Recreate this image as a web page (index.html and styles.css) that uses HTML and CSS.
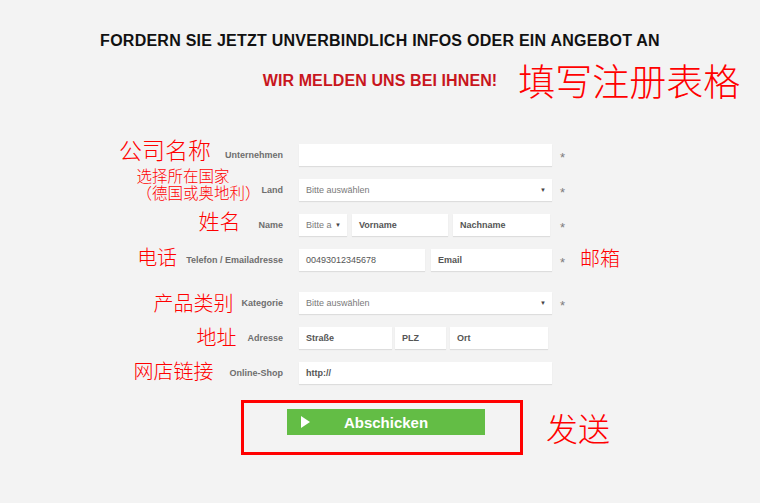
FILE: index.html
```html
<!DOCTYPE html>
<html lang="de">
<head>
<meta charset="utf-8">
<title>Anfrage</title>
<link rel="stylesheet" href="styles.css">
</head>
<body>
<div class="page">
  <h1 class="title">FORDERN SIE JETZT UNVERBINDLICH INFOS ODER EIN ANGEBOT AN</h1>
  <div class="subrow">
    <span></span>
    <h2 class="subtitle">WIR MELDEN UNS BEI IHNEN!</h2>
    <span class="note note-head">填写注册表格</span>
  </div>

  <form class="form">
    <div class="row">
      <div class="lab"><span class="note n-company">公司名称</span><span class="label">Unternehmen</span></div>
      <div class="fields"><div class="inp w-full"></div></div>
      <div class="req">*</div>
    </div>

    <div class="row">
      <div class="lab"><span class="note n-country"><span class="line1">选择所在国家</span><span class="line2">（德国或奥地利）</span></span><span class="label">Land</span></div>
      <div class="fields"><div class="inp w-full sel"><span class="ph">Bitte auswählen</span><span class="arrow">▼</span></div></div>
      <div class="req">*</div>
    </div>

    <div class="row">
      <div class="lab"><span class="note n-name">姓名</span><span class="label">Name</span></div>
      <div class="fields f-name">
        <div class="inp w-anrede sel"><span class="ph">Bitte a</span><span class="arrow">▼</span></div>
        <div class="inp w-vorname"><span class="val">Vorname</span></div>
        <div class="inp w-nachname"><span class="val">Nachname</span></div>
      </div>
      <div class="req">*</div>
    </div>

    <div class="row">
      <div class="lab"><span class="note n-phone">电话</span><span class="label">Telefon / Emailadresse</span></div>
      <div class="fields f-phone">
        <div class="inp w-phone"><span class="num">00493012345678</span></div>
        <div class="inp w-email"><span class="val">Email</span></div>
      </div>
      <div class="req">*</div>
      <div class="note n-mail">邮箱</div>
    </div>

    <div class="row row-spaced">
      <div class="lab"><span class="note n-cat">产品类别</span><span class="label">Kategorie</span></div>
      <div class="fields"><div class="inp w-full sel"><span class="ph">Bitte auswählen</span><span class="arrow">▼</span></div></div>
      <div class="req">*</div>
    </div>

    <div class="row">
      <div class="lab"><span class="note n-addr">地址</span><span class="label">Adresse</span></div>
      <div class="fields f-addr">
        <div class="inp w-street"><span class="val">Straße</span></div>
        <div class="inp w-plz"><span class="val">PLZ</span></div>
        <div class="inp w-ort"><span class="val">Ort</span></div>
      </div>
    </div>

    <div class="row">
      <div class="lab"><span class="note n-shop">网店链接</span><span class="label">Online-Shop</span></div>
      <div class="fields"><div class="inp w-full"><span class="val">http://</span></div></div>
    </div>
  </form>

  <div class="submit-row">
    <div class="submit-box">
      <button class="btn" type="button"><span class="tri"></span><span class="btn-text">Abschicken</span><span></span></button>
    </div>
    <span class="note n-send">发送</span>
  </div>
</div>
</body>
</html>
```

FILE: styles.css
```css
html, body {
  margin: 0;
  padding: 0;
  background: #f3f3f3;
}
body {
  font-family: "Liberation Sans", Arial, sans-serif;
  width: 760px;
  height: 503px;
  overflow: hidden;
}
.page {
  padding-top: 31px;
}
.title {
  margin: 0;
  font-size: 16px;
  line-height: 20px;
  font-weight: bold;
  color: #111;
  text-align: center;
  letter-spacing: 0.25px;
}
.subrow {
  display: grid;
  grid-template-columns: 1fr auto 1fr;
  align-items: center;
  height: 40px;
  margin-top: 9px;
}
.subtitle {
  margin: 0;
  font-size: 16px;
  line-height: 20px;
  font-weight: bold;
  color: #c8161d;
  letter-spacing: 0.1px;
  padding-top: 2px;
}
.note {
  font-family: "Noto Sans CJK SC", "Noto Sans CJK JP", sans-serif;
  font-weight: 300;
  color: #ff0000;
  white-space: nowrap;
}
.note-head {
  font-size: 37px;
  line-height: 40px;
  margin-left: 21px;
}

.form {
  margin-top: 44px;
  display: flex;
  flex-direction: column;
  gap: 13px;
}
.row {
  display: grid;
  grid-template-columns: 283px 269px 28px auto;
  grid-template-rows: 22px;
  height: 22px;
  align-items: center;
}
.row-spaced {
  margin-top: 8px;
}
.lab {
  display: flex;
  justify-content: flex-end;
  align-items: center;
  height: 22px;
}
.label {
  font-size: 9px;
  font-weight: bold;
  color: #6e6e6e;
  white-space: nowrap;
}
.fields {
  display: flex;
  padding-left: 16px;
  height: 22px;
}
.f-name { gap: 5px; }
.f-phone { gap: 6px; }
.f-addr { gap: 3px; }
.f-addr .w-ort { margin-left: 1px; }

.inp {
  background: #fff;
  height: 22px;
  box-sizing: border-box;
  padding: 0 7px;
  display: flex;
  align-items: center;
  box-shadow: 0 1px 1px rgba(0, 0, 0, 0.09);
  font-size: 9px;
}
.w-full { width: 253px; }
.w-anrede { width: 48px; }
.w-vorname { width: 96px; }
.w-nachname { width: 97px; }
.w-phone { width: 126px; }
.w-email { width: 121px; }
.w-street { width: 93px; }
.w-plz { width: 51px; }
.w-ort { width: 98px; }

.sel {
  justify-content: space-between;
}
.ph {
  color: #7a7a7a;
}
.val {
  color: #555;
  font-weight: bold;
}
.num {
  color: #555;
}
.arrow {
  font-size: 6px;
  color: #444;
  margin-right: -1px;
}
.req {
  padding-left: 8px;
  padding-top: 6px;
  font-size: 13px;
  line-height: 16px;
  color: #7c7c7c;
}

.n-company {
  font-size: 23px;
  line-height: 26px;
  margin-right: 14px;
  margin-bottom: 12px;
}
.n-country {
  display: flex;
  flex-direction: column;
  align-items: flex-start;
  font-size: 15.5px;
  line-height: 17px;
  margin-right: 1px;
  margin-bottom: 13px;
}
.n-name {
  font-size: 21px;
  line-height: 24px;
  margin-right: 18px;
  margin-bottom: 10px;
}
.n-phone {
  font-size: 20px;
  line-height: 24px;
  margin-right: 9px;
  margin-bottom: 6px;
}
.n-cat {
  font-size: 20px;
  line-height: 24px;
  margin-right: 8px;
  margin-bottom: 1px;
}
.n-addr {
  font-size: 20px;
  line-height: 24px;
  margin-right: 11px;
  margin-bottom: 2px;
}
.n-shop {
  font-size: 20px;
  line-height: 24px;
  margin-right: 16px;
  margin-bottom: 4px;
}
.n-mail {
  font-size: 20px;
  line-height: 24px;
  margin-bottom: 5px;
}

.submit-row {
  margin-top: 16px;
  margin-left: 241px;
  display: flex;
  align-items: center;
}
.submit-box {
  border: 3px solid #ff0000;
  padding: 6px 35px 17px 43px;
  width: 198px;
}
.btn {
  display: grid;
  grid-template-columns: 1fr auto 1fr;
  align-items: center;
  width: 198px;
  height: 26px;
  padding: 0;
  border: 0;
  background: #63bd45;
  color: #fff;
  font-family: "Liberation Sans", Arial, sans-serif;
  font-size: 15px;
  font-weight: bold;
}
.tri {
  justify-self: start;
  margin-left: 14px;
  width: 0;
  height: 0;
  border-left: 9px solid #fff;
  border-top: 6px solid transparent;
  border-bottom: 6px solid transparent;
}
.btn-text {
  padding-top: 1px;
}
.n-send {
  font-size: 32px;
  line-height: 36px;
  margin-left: 23px;
  margin-bottom: 2px;
}
```
